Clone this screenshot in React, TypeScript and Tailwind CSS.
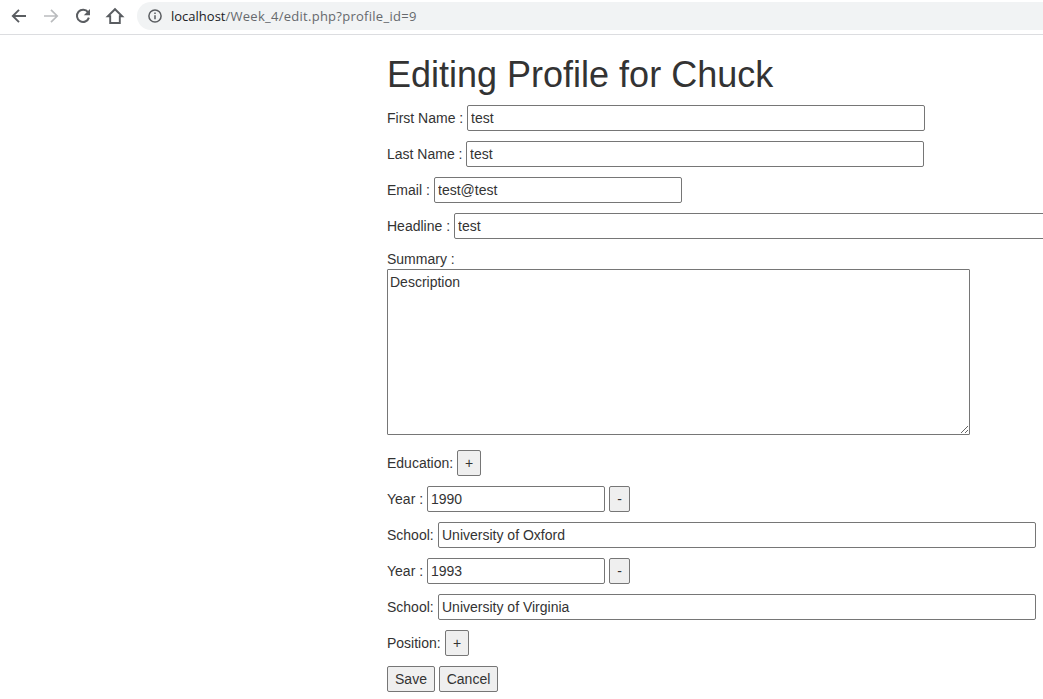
import type { ReactNode } from "react";

function Row({ label, labelWidth, children }: { label: string; labelWidth: string; children: ReactNode }) {
  return (
    <div className="mb-[10px] flex h-[26px] items-center whitespace-nowrap">
      <span className={`${labelWidth} shrink-0`}>{label}</span>
      {children}
    </div>
  );
}

function Field({ value, width }: { value: string; width: string }) {
  return (
    <input
      type="text"
      defaultValue={value}
      className={`${width} h-[26px] shrink-0 rounded-[2px] border border-[#767676] bg-white px-[3px] py-px outline-none`}
    />
  );
}

function Button({ children, width }: { children: ReactNode; width: string }) {
  return (
    <button
      type="button"
      className={`${width} flex h-[26px] shrink-0 items-center justify-center rounded-[2px] border border-[#767676] bg-[#efefef]`}
    >
      {children}
    </button>
  );
}

function BrowserBar() {
  return (
    <header className="flex h-[35px] items-start border-b border-[#dcdde0] bg-white pt-[2px]">
      <nav className="flex h-7 w-[137px] shrink-0 items-center gap-3 pl-[9px] text-[#5a5d61]">
        <svg width="20" height="20" viewBox="0 0 20 20" fill="none" stroke="currentColor" strokeWidth="1.9">
          <path d="M17 10H4.2M10 3.8 3.8 10l6.2 6.2" />
        </svg>
        <svg width="20" height="20" viewBox="0 0 20 20" fill="none" stroke="#babcbe" strokeWidth="1.7">
          <path d="M3 10h12.8M10 3.8l6.2 6.2-6.2 6.2" />
        </svg>
        <svg width="20" height="20" viewBox="0 0 20 20" fill="none" stroke="currentColor" strokeWidth="2">
          <path d="M15 6.2A6.1 6.1 0 1 0 15.9 11.6" />
          <path d="M17 3v6.2h-6.2z" fill="currentColor" stroke="none" />
        </svg>
        <svg width="20" height="20" viewBox="0 0 20 20" fill="none" stroke="currentColor" strokeWidth="1.9">
          <path d="M5.2 17V10.3H2.8L10 3.2l7.2 7.1h-2.4V17z" />
        </svg>
      </nav>
      <div className="flex h-7 flex-1 items-center rounded-l-full bg-[#f1f3f4] pl-[11px]">
        <svg width="14" height="14" viewBox="0 0 14 14" fill="none" stroke="#5a5d61" strokeWidth="1.5">
          <circle cx="7" cy="7" r="6.1" />
          <path d="M7 6.2v4.1M7 3.5v1.5" />
        </svg>
        <span className="ml-[9px] font-['Open_Sans','Noto_Sans',sans-serif] text-[13px] leading-7 text-[#66696d]">
          <span className="text-[#202124]">localhost</span>
          <span className="tracking-[0.27px]">/Week_4/edit.php?profile_id=9</span>
        </span>
      </div>
    </header>
  );
}

export default function App() {
  return (
    <div className="h-[699px] w-full overflow-hidden bg-white font-['Liberation_Sans',Arial,sans-serif] text-[14px] leading-5 text-[#333]">
      <BrowserBar />
      <main className="ml-[387px] pt-5">
        <h1 className="mb-[10px] h-10 whitespace-nowrap text-[36px] leading-10">Editing Profile for Chuck</h1>
        <Row label="First Name :" labelWidth="w-[80px]">
          <Field value="test" width="w-[458px]" />
        </Row>
        <Row label="Last Name :" labelWidth="w-[79px]">
          <Field value="test" width="w-[458px]" />
        </Row>
        <Row label="Email :" labelWidth="w-[47px]">
          <Field value="test@test" width="w-[248px]" />
        </Row>
        <Row label="Headline :" labelWidth="w-[67px]">
          <Field value="test" width="w-[598px]" />
        </Row>
        <div className="mb-[15px]">
          <label className="block h-5">Summary :</label>
          <textarea
            defaultValue="Description"
            className="block h-[166px] w-[583px] resize rounded-[1px] border border-[#767676] bg-white p-[2px] outline-none"
          />
        </div>
        <Row label="Education:" labelWidth="w-[70px]">
          <Button width="w-[24px]">+</Button>
        </Row>
        {[
          ["1990", "University of Oxford"],
          ["1993", "University of Virginia"],
        ].map(([year, school]) => (
          <div key={year}>
            <Row label="Year :" labelWidth="w-[40px]">
              <div className="flex gap-1">
                <Field value={year} width="w-[178px]" />
                <Button width="w-[21px]">-</Button>
              </div>
            </Row>
            <Row label="School:" labelWidth="w-[51px]">
              <Field value={school} width="w-[598px]" />
            </Row>
          </div>
        ))}
        <Row label="Position:" labelWidth="w-[58px]">
          <Button width="w-[24px]">+</Button>
        </Row>
        <div className="flex gap-1">
          <Button width="w-[48px]">Save</Button>
          <Button width="w-[59px]">Cancel</Button>
        </div>
      </main>
    </div>
  );
}
